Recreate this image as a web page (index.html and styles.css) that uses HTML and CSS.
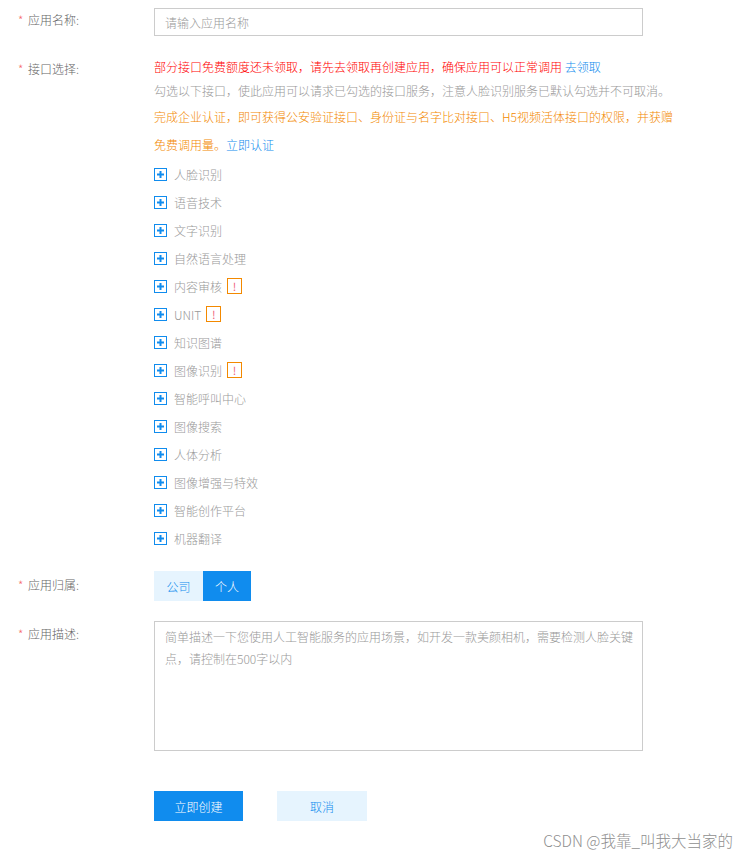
FILE: index.html
```html
<!DOCTYPE html>
<html lang="zh-CN">
<head>
<meta charset="utf-8">
<title>创建应用</title>
<link rel="stylesheet" href="styles.css">
</head>
<body>
<div class="form">
  <div class="row row-name">
    <div class="lbl"><span class="req">*</span>应用名称:</div>
    <div class="ctl"><input class="text-input" type="text" placeholder="请输入应用名称"></div>
  </div>

  <div class="row row-api">
    <div class="lbl"><span class="req">*</span>接口选择:</div>
    <div class="ctl">
      <p class="tip tip-red">部分接口免费额度还未领取，请先去领取再创建应用，确保应用可以正常调用 <a class="link">去领取</a></p>
      <p class="tip tip-gray">勾选以下接口，使此应用可以请求已勾选的接口服务，注意人脸识别服务已默认勾选并不可取消。</p>
      <p class="tip tip-orange">完成企业认证，即可获得公安验证接口、身份证与名字比对接口、H5视频活体接口的权限，并获赠<br>免费调用量。<a class="link">立即认证</a></p>
      <ul class="api-list">
        <li class="api"><svg class="plus" viewBox="0 0 13 13"><rect x="0.5" y="0.5" width="12" height="12"/><path d="M3 6.5h7M6.5 3v7"/></svg><span>人脸识别</span></li>
        <li class="api"><svg class="plus" viewBox="0 0 13 13"><rect x="0.5" y="0.5" width="12" height="12"/><path d="M3 6.5h7M6.5 3v7"/></svg><span>语音技术</span></li>
        <li class="api"><svg class="plus" viewBox="0 0 13 13"><rect x="0.5" y="0.5" width="12" height="12"/><path d="M3 6.5h7M6.5 3v7"/></svg><span>文字识别</span></li>
        <li class="api"><svg class="plus" viewBox="0 0 13 13"><rect x="0.5" y="0.5" width="12" height="12"/><path d="M3 6.5h7M6.5 3v7"/></svg><span>自然语言处理</span></li>
        <li class="api"><svg class="plus" viewBox="0 0 13 13"><rect x="0.5" y="0.5" width="12" height="12"/><path d="M3 6.5h7M6.5 3v7"/></svg><span>内容审核</span><i class="badge">!</i></li>
        <li class="api"><svg class="plus" viewBox="0 0 13 13"><rect x="0.5" y="0.5" width="12" height="12"/><path d="M3 6.5h7M6.5 3v7"/></svg><span>UNIT</span><i class="badge">!</i></li>
        <li class="api"><svg class="plus" viewBox="0 0 13 13"><rect x="0.5" y="0.5" width="12" height="12"/><path d="M3 6.5h7M6.5 3v7"/></svg><span>知识图谱</span></li>
        <li class="api"><svg class="plus" viewBox="0 0 13 13"><rect x="0.5" y="0.5" width="12" height="12"/><path d="M3 6.5h7M6.5 3v7"/></svg><span>图像识别</span><i class="badge">!</i></li>
        <li class="api"><svg class="plus" viewBox="0 0 13 13"><rect x="0.5" y="0.5" width="12" height="12"/><path d="M3 6.5h7M6.5 3v7"/></svg><span>智能呼叫中心</span></li>
        <li class="api"><svg class="plus" viewBox="0 0 13 13"><rect x="0.5" y="0.5" width="12" height="12"/><path d="M3 6.5h7M6.5 3v7"/></svg><span>图像搜索</span></li>
        <li class="api"><svg class="plus" viewBox="0 0 13 13"><rect x="0.5" y="0.5" width="12" height="12"/><path d="M3 6.5h7M6.5 3v7"/></svg><span>人体分析</span></li>
        <li class="api"><svg class="plus" viewBox="0 0 13 13"><rect x="0.5" y="0.5" width="12" height="12"/><path d="M3 6.5h7M6.5 3v7"/></svg><span>图像增强与特效</span></li>
        <li class="api"><svg class="plus" viewBox="0 0 13 13"><rect x="0.5" y="0.5" width="12" height="12"/><path d="M3 6.5h7M6.5 3v7"/></svg><span>智能创作平台</span></li>
        <li class="api"><svg class="plus" viewBox="0 0 13 13"><rect x="0.5" y="0.5" width="12" height="12"/><path d="M3 6.5h7M6.5 3v7"/></svg><span>机器翻译</span></li>
      </ul>
    </div>
  </div>

  <div class="row row-owner">
    <div class="lbl"><span class="req">*</span>应用归属:</div>
    <div class="ctl seg">
      <button class="seg-btn">公司</button><button class="seg-btn active">个人</button>
    </div>
  </div>

  <div class="row row-desc">
    <div class="lbl"><span class="req">*</span>应用描述:</div>
    <div class="ctl"><textarea class="text-area" placeholder="简单描述一下您使用人工智能服务的应用场景，如开发一款美颜相机，需要检测人脸关键点，请控制在500字以内"></textarea></div>
  </div>

  <div class="row row-actions">
    <div></div>
    <div class="ctl actions">
      <button class="btn btn-primary">立即创建</button>
      <button class="btn btn-light">取消</button>
    </div>
  </div>
</div>
<div class="watermark">CSDN @我靠_叫我大当家的</div>
</body>
</html>
```

FILE: styles.css
```css
* { box-sizing: border-box; }

html, body {
  margin: 0;
  background: #fff;
}

body {
  font-family: "Noto Sans CJK SC", "Noto Sans", "Liberation Sans", sans-serif;
  font-size: 12px;
  font-weight: 300;
  color: #666;
  padding: 8px 0 0 18px;
}

.form {
  display: flex;
  flex-direction: column;
}

.row {
  display: grid;
  grid-template-columns: 136px 560px;
}

.lbl {
  line-height: 20px;
  color: #666;
  white-space: nowrap;
}

.req {
  color: #f56c6c;
  display: inline-block;
  width: 10px;
}

.row-name .lbl { padding-top: 2px; }

.text-input {
  display: block;
  width: 489px;
  height: 28px;
  border: 1px solid #ccc;
  padding: 0 10px;
  font-family: inherit;
  font-weight: 300;
  font-size: 12px;
  color: #333;
  outline: none;
}
.text-input::placeholder { color: #999; }

.row-api { margin-top: 19px; }
.row-api .lbl { padding-top: 4px; }

.tip {
  margin: 0;
  white-space: nowrap;
}
.tip-red { color: #ff0000; line-height: 24px; }
.tip-gray { color: #999; line-height: 24px; }
.tip-orange { color: #f38900; line-height: 28px; margin-bottom: 1px; }

.link {
  color: #108cee;
  cursor: pointer;
}

.api-list {
  list-style: none;
  margin: 0;
  padding: 0;
}

.api {
  display: flex;
  align-items: center;
  height: 28px;
  color: #999;
}

.plus {
  width: 13px;
  height: 13px;
  margin-right: 7px;
  flex: none;
}
.plus rect {
  fill: none;
  stroke: #108cee;
  stroke-width: 1;
}
.plus path {
  stroke: #108cee;
  stroke-width: 2;
  fill: none;
}

.badge {
  display: inline-flex;
  align-items: center;
  justify-content: center;
  width: 15px;
  height: 16px;
  border: 1px solid #f38900;
  margin-left: 5px;
  font-style: normal;
  font-weight: normal;
  color: #f0607a;
  font-size: 11px;
  line-height: 1;
}

.row-owner { margin-top: 19px; }
.row-owner .lbl { padding-top: 4px; }

.seg { display: flex; }

.seg-btn {
  height: 30px;
  border: 0;
  padding: 0;
  width: 49px;
  font-family: inherit;
  font-weight: 300;
  font-size: 12px;
  background: #e6f4fe;
  color: #108cee;
}
.seg-btn.active {
  width: 48px;
  background: #108cee;
  color: #fff;
}

.row-desc { margin-top: 20px; }
.row-desc .lbl { padding-top: 3px; }

.text-area {
  display: block;
  width: 489px;
  height: 130px;
  border: 1px solid #ccc;
  padding: 4px 8px 4px 10px;
  font-family: inherit;
  font-weight: 300;
  font-size: 12px;
  line-height: 22px;
  color: #333;
  resize: none;
  outline: none;
}
.text-area::placeholder { color: #999; }

.row-actions { margin-top: 40px; }

.actions {
  display: flex;
  gap: 34px;
}

.btn {
  height: 30px;
  border: 0;
  padding: 0;
  font-family: inherit;
  font-weight: 300;
  font-size: 12px;
}
.btn-primary {
  width: 89px;
  background: #108cee;
  color: #fff;
}
.btn-light {
  width: 90px;
  background: #e6f4fe;
  color: #108cee;
}

.watermark {
  margin-top: 8px;
  text-align: right;
  padding-right: 16px;
  font-size: 15.5px;
  line-height: 22px;
  color: #8f8f8f;
}
```
